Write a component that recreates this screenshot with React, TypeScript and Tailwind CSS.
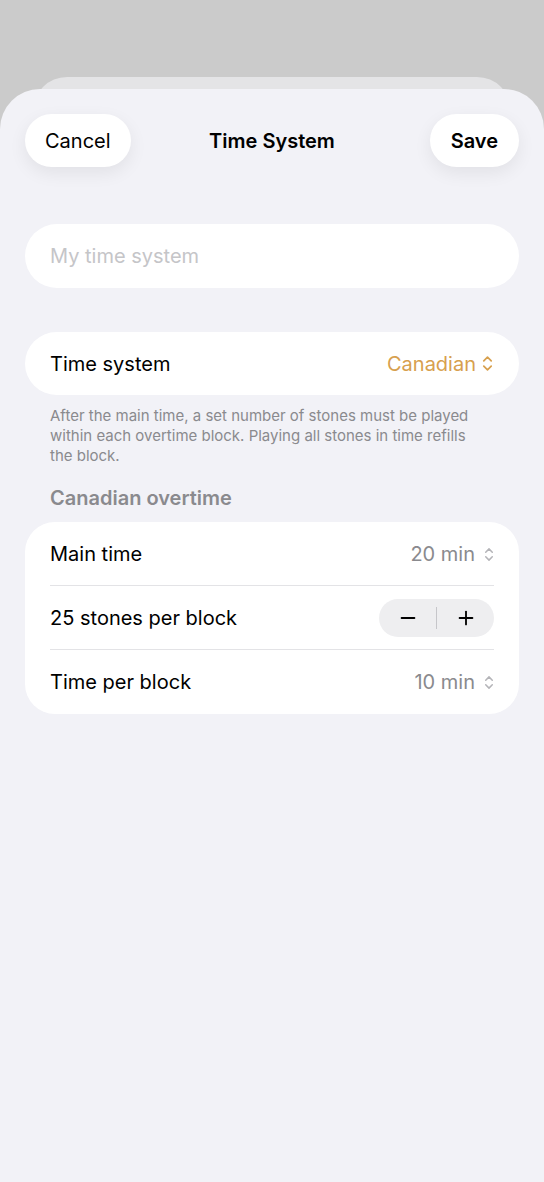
import { Minus, Plus } from 'lucide-react'

function UpDown({ className }: { className?: string }) {
  return (
    <svg viewBox="0 0 10 16" className={className} fill="none" stroke="currentColor" strokeWidth="1.6" strokeLinecap="round" strokeLinejoin="round">
      <path d="M1.5 5.5 5 2l3.5 3.5" />
      <path d="M1.5 10.5 5 14l3.5-3.5" />
    </svg>
  )
}

function Row({ label, children, divider }: { label: string; children: React.ReactNode; divider?: boolean }) {
  return (
    <div className="relative flex h-16 items-center justify-between pl-[25px] pr-[25px]">
      <span className="text-[20px] text-black">{label}</span>
      <div className="flex items-center">{children}</div>
      {divider && <div className="absolute bottom-0 left-[25px] right-[25px] h-px bg-[#e3e3e6]" />}
    </div>
  )
}

export default function App() {
  return (
    <div
      className="flex h-[1182px] w-[544px] flex-col overflow-hidden bg-[#cbcbcb] pt-[77px]"
      style={{ fontFamily: 'Inter, "Noto Sans", sans-serif' }}
    >
      {/* stacked sheet behind */}
      <div className="mx-[33px] h-[44px] shrink-0 rounded-t-[34px] bg-[#e4e4e6]" />

      {/* main sheet */}
      <div className="relative -mt-[32px] flex flex-1 flex-col rounded-t-[40px] bg-[#f2f2f7] px-[25px]">
        {/* header */}
        <div className="mt-[25px] grid h-[53px] grid-cols-[1fr_auto_1fr] items-center">
          <div className="flex justify-start">
            <button className="h-[53px] rounded-full bg-white px-5 text-[20px] text-black shadow-[0_6px_18px_rgba(0,0,0,0.07)]">
              Cancel
            </button>
          </div>
          <span className="text-[20px] font-semibold text-black">Time System</span>
          <div className="flex justify-end">
            <button className="h-[53px] rounded-full bg-white px-[21px] text-[20px] font-semibold text-black shadow-[0_6px_18px_rgba(0,0,0,0.07)]">
              Save
            </button>
          </div>
        </div>

        {/* name field */}
        <div className="mt-[57px] flex h-16 items-center rounded-full bg-white px-[25px]">
          <span className="text-[20px] text-[#c5c5c8]">My time system</span>
        </div>

        {/* time system picker */}
        <div className="mt-[44px] flex h-[63px] items-center justify-between rounded-full bg-white pl-[25px] pr-[26px]">
          <span className="text-[20px] text-black">Time system</span>
          <div className="flex items-center gap-[6px] text-[#d7a04e]">
            <span className="text-[20px]">Canadian</span>
            <UpDown className="h-[17px] w-[11px]" />
          </div>
        </div>
        <p className="mt-[11px] pl-[25px] pr-[31px] text-[15px] leading-[20px] text-[#8a8a8e]">
          After the main time, a set number of stones must be played within each overtime block. Playing all stones in time refills the block.
        </p>

        <h3 className="mt-[17px] px-[25px] text-[20px] font-semibold text-[#8a8a8e]">Canadian overtime</h3>

        <div className="mt-[9px] overflow-hidden rounded-[30px] bg-white">
          <Row label="Main time" divider>
            <span className="text-[20px] text-[#8a8a8e]">20 min</span>
            <UpDown className="ml-[9px] h-[15px] w-[10px] text-[#b4b4b8]" />
          </Row>
          <Row label="25 stones per block" divider>
            <div className="flex h-[38px] w-[115px] items-center rounded-full bg-[#eeeef0]">
              <div className="flex flex-1 items-center justify-center">
                <Minus className="h-[22px] w-[22px] text-black" strokeWidth={2} />
              </div>
              <div className="h-[22px] w-px bg-[#c6c6ca]" />
              <div className="flex flex-1 items-center justify-center">
                <Plus className="h-[22px] w-[22px] text-black" strokeWidth={2} />
              </div>
            </div>
          </Row>
          <Row label="Time per block">
            <span className="text-[20px] text-[#8a8a8e]">10 min</span>
            <UpDown className="ml-[9px] h-[15px] w-[10px] text-[#b4b4b8]" />
          </Row>
        </div>
      </div>
    </div>
  )
}
